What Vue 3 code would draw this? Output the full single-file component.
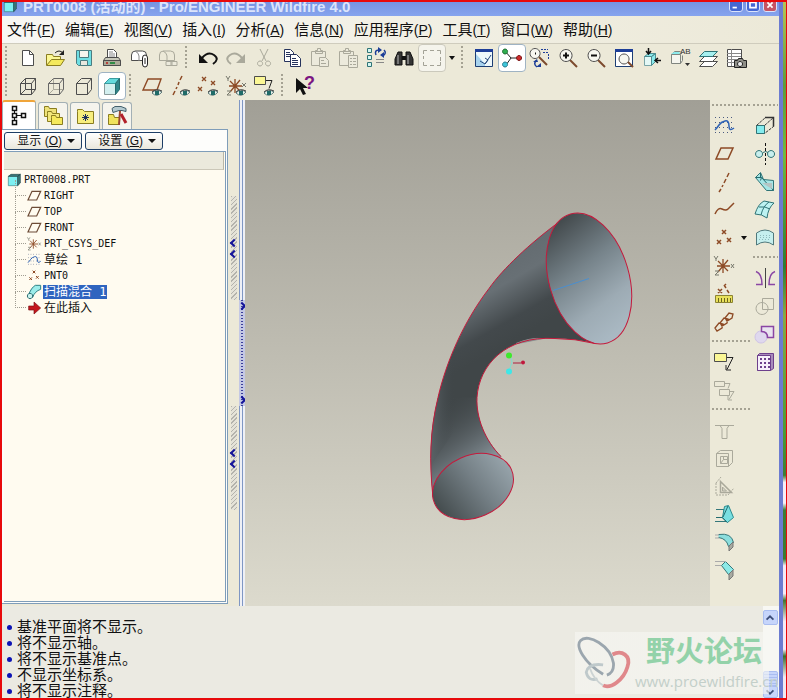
<script setup>
import { ref } from 'vue'

const menus = [
    ['文件', 'F'], ['编辑', 'E'], ['视图', 'V'], ['插入', 'I'], ['分析', 'A'],
    ['信息', 'N'], ['应用程序', 'P'], ['工具', 'T'], ['窗口', 'W'], ['帮助', 'H']
]

const fileTools = ['new', 'open', 'save', 'print', 'mail', 'link']
const editTools = ['undo', 'redo', 'cut', 'copy', 'paste', 'pasteSpecial', 'regenerate', 'find', 'select']
const viewTools = ['repaint', 'spin', 'orient', 'zoomIn', 'zoomOut', 'refit', 'reorient', 'saved', 'layers', 'manager']
const displayTools = ['wireframe', 'hidden', 'noHidden', 'shaded']
const datumTools = ['planeEye', 'axisEye', 'pointEye', 'csysEye', 'noteEye']

const bars = [
    [{ tools: fileTools }, { tools: editTools, arrow: true }, { tools: viewTools }],
    [{ tools: displayTools }, { tools: datumTools }, { tools: ['help'] }]
]

const datumColumn = [
    ['sketch', 'plane', 'axis', 'curve', 'point', 'csys', 'analysis', 'reference'],
    ['note', 'noteCopy'],
    ['hole', 'shell', 'rib', 'draft', 'round', 'chamfer']
]
const featureColumn = [
    ['extrude', 'revolve', 'sweep', 'boundary', 'style'],
    ['mirror', 'merge', 'trim', 'pattern']
]
const docks = [datumColumn, featureColumn]

const pressed = ref(['select', 'spin', 'shaded'])
const activeTab = ref('tree')
const selected = ref('扫描混合 1')

const tabs = ['tree', 'folders', 'favorites', 'connections']

const tree = [
    { icon: 'planeSmall', name: 'RIGHT' },
    { icon: 'planeSmall', name: 'TOP' },
    { icon: 'planeSmall', name: 'FRONT' },
    { icon: 'csys', name: 'PRT_CSYS_DEF' },
    { icon: 'sketch', name: '草绘 1', cjk: true },
    { icon: 'point', name: 'PNT0' },
    { icon: 'blend', name: '扫描混合 1', cjk: true },
    { icon: 'insert', name: '在此插入', cjk: true }
]

const messages = [
    '基准平面将不显示。',
    '将不显示轴。',
    '将不显示基准点。',
    '不显示坐标系。',
    '将不显示注释。'
]

const brown = '#8d4a25'
const grey = '#aaa99b'
const dark = '#4d4d4d'
const aqua = '#8beaec'
const teal = '#2f7476'
const purple = '#8a46a4'
const yellow = '#fbf795'

// every part is [path, stroke, fill, stroke width, dashes] on a 24 x 24 grid
const eye = [
    ['M12 19Q16 14 22 18Q17 24 12 19z', '#5a7878', '#e9f1ec'],
    ['M15 17h4v4h-4z', 'none', '#1f6b68'],
    ['M12 18Q16 14 22 17', '#444', 'none']
]
const magnifier = [
    ['M14 14L21 21', '#7c4a2d', 'none', 2],
    ['M10 3.500a6 6 0 1 0 .1 0z', dark, '#f7f7f0']
]
const cross = (x, y, s = 2) => `M${x - s} ${y - s}l${2 * s} ${2 * s}M${x + s} ${y - s}l${-2 * s} ${2 * s}`
const points = cross(12, 6) + cross(7, 16) + cross(17, 14)
const axes = [['M11 5V19M5 12H18M6 7L16 17M16 6L6 18', brown, 'none', 1.3]]
const axisMarks = [['M2 2l2 3 2-3M4 5v2M3 17h4l-4 4h4M19 10l3 4M22 10l-3 4', '#77786c', 'none']]

const icons = {
    new: [['M6.500 4.500h7l4 4v11h-11z', dark, '#fff'], ['M13.500 4.500v4h4', dark, 'none']],
    open: [
        ['M2.500 19V8.500h6l1 2h7v4', '#8a7d20', yellow],
        ['M2.500 19.500l5-6h13l-4 6z', '#8a7d20', '#f4e95c'],
        ['M11 7q4-4 8 0', '#222', 'none'],
        ['M20 4v5h-5z', 'none', '#222']
    ],
    save: [
        ['M4.500 4.500h15v15h-13l-2-2z', '#4b7c80', '#6fdfe3'],
        ['M7.500 4.500h9v7h-9z', '#4b7c80', '#f5f5ee'],
        ['M8.500 14.500h7v5h-7z', '#4b7c80', '#e8e8de']
    ],
    print: [
        ['M7.500 12V3.500h6l3 3V12', dark, '#fff'],
        ['M9 6h4M9 8h6M9 10h6', '#888', 'none'],
        ['M3.500 14.500l2-3h13l2 3v5h-17z', dark, '#c9c9bb'],
        ['M3.500 14.500h17v5h-17z', dark, '#aaaa98'],
        ['M6 16h2v2h-2z', 'none', '#b8403a'],
        ['M10 17h5', '#2f8c46', 'none', 2]
    ],
    mail: [
        ['M3.500 14.500V9q0-4 4-4h7q4 0 4 4v5.500z', dark, '#fff'],
        ['M7 5q4 2 4 5v5', '#888', 'none'],
        ['M14.500 12q0-3 2.500-3t2.500 3v6q0 3-2.500 3t-2.500-3zM17 12v6', '#222', '#fff']
    ],
    link: [
        ['M3.500 14.500V9q0-4 4-4h7q4 0 4 4v5.500z', grey, 'none'],
        ['M7 5q4 2 4 5v5', grey, 'none'],
        ['M10 15.500h6v4h-6zM15 15.500h6v4h-6z', grey, '#eceadc']
    ],
    undo: [['M6 12Q12 5 18 9T17 18', '#111', 'none', 2], ['M3 8v9h9z', 'none', '#111']],
    redo: [['M18 12Q12 5 6 9T7 18', grey, 'none', 2], ['M21 8v9h-9z', 'none', grey]],
    cut: [['M8 3l6 12M16 3l-6 12M8 15a2.500 2.500 0 1 0 .1 0zM16 15a2.500 2.500 0 1 0 .1 0z', grey, 'none']],
    copy: [
        ['M4.500 3.500h6l3 3v9h-9z', '#26335c', '#fff'],
        ['M6 6.500h4M6 8.500h6M6 10.500h6', '#26335c', 'none'],
        ['M10.500 8.500h6l4 4v8h-10z', '#26335c', '#fff'],
        ['M12 12.500h4M12 14.500h6M12 16.500h6M12 18.500h6', '#26335c', 'none']
    ],
    paste: [
        ['M3.500 5.500h14v14h-14zM7.500 7.500v-3h2v-2h3v2h2v3z', grey, '#eceadc'],
        ['M11.500 11.500h6l3 3v6h-9z', grey, '#eceadc'],
        ['M13 14.500h3M13 17.500h5', grey, 'none']
    ],
    pasteSpecial: [
        ['M3.500 5.500h14v14h-14zM7.500 7.500v-3h2v-2h3v2h2v3z', grey, '#eceadc'],
        ['M12.500 9.500h9v12h-9z', grey, '#eceadc'],
        ['M14 12.500h2M17 12.500h3M14 15.500h2M17 15.500h3M14 18.500h2M17 18.500h3', grey, 'none']
    ],
    regenerate: [
        ['M3.500 2.500h4v4h-4zM3.500 9.500h4v4h-4zM3.500 16.500h4v4h-4z', teal, '#d6f5f2'],
        ['M12 9Q10 4 15 4M20 4q3 3-1 6', '#1d3e98', 'none', 1.5],
        ['M14 1v6l4-3zM20 12v-6l-4 3z', 'none', '#1d3e98'],
        ['M12 13.500h8M12 16.500h8', '#888', 'none']
    ],
    find: [
        ['M3 19v-6l3-7h4v13zM21 19v-6l-3-7h-4v13z', '#111', '#333'],
        ['M10 10h4v4h-4z', 'none', '#111'],
        ['M6 9v9M16 9v9', '#bbb', 'none']
    ],
    select: [['M3.500 8V4.500H7M10 4.500h4M17 4.500h3.500V8M20.500 11v4M20.500 16v3.500H17M14 19.500h-4M7 19.500H3.500V16M3.500 13v-3', '#a3a296', 'none']],
    repaint: [
        ['M3.500 3.500h17v17h-17z', '#1d3e74', '#eef8fb'],
        ['M3 3h18v3H3z', 'none', '#1d3e98'],
        ['M4 20V8l9 10v2z', 'none', '#a8d3ee'],
        ['M8 15l5 3 3-4-3-2M13 18l6-9', '#24487c', 'none']
    ],
    spin: [
        ['M5 5l6 7h9M11 12l-5 7', '#222', 'none'],
        ['M5 3a2.500 2.500 0 1 0 .1 0z', '#1c6b31', '#2fae4f'],
        ['M19 9.500a2.500 2.500 0 1 0 .1 0z', '#7a1616', '#cf2b2b'],
        ['M5 16a2.500 2.500 0 1 0 .1 0z', '#257a8c', '#3fc7da']
    ],
    orient: [
        ['M7 2.500a5 5 0 1 0 .1 0z', dark, '#f7f7f0'],
        ['M11 11l8 8', '#7c4a2d', 'none', 2],
        ['M7 7.500h1', '#111', 'none', 2],
        ['M13 3.500h7M15 6.500h6M20.500 8v5', '#1d3e98', 'none', 1, '2 1'],
        ['M8 15q-3 3 1 6', '#1d3e98', 'none', 1.500],
        ['M5 16h5l-1-3zM8 21h5v-4z', 'none', '#1d3e98']
    ],
    zoomIn: [...magnifier, ['M7 9.500h6M10 6.500v6', '#111', 'none', 2]],
    zoomOut: [...magnifier, ['M7 9.500h6', '#111', 'none', 2]],
    refit: [
        ['M3.500 3.500h17v17h-17z', '#1d3e74', '#fff'],
        ['M3 3h18v3H3z', 'none', '#1d3e98'],
        ['M12 8a5 5 0 1 0 .1 0z', dark, '#f7f7f0'],
        ['M16 16l5 5', '#7c4a2d', 'none', 2]
    ],
    reorient: [
        ['M4.500 10.500h7v9h-7z', '#7aa5a7', '#e4f8f6'],
        ['M4.500 10.500l4-3h7l-4 3zM11.500 19.500l4-4v-8l-4 3z', '#4d8d91', aqua],
        ['M8.500 2v6M6 5l2.500 3L11 5M21 14.500h-6M18 12l-3 2.500 3 2.500', '#111', 'none', 1.500]
    ],
    saved: [
        ['M3.500 8.500h9v9h-9zM3.500 8.500l3-3h6M12.500 17.500l2-3v-5M12.500 8.500l2-2', '#80857f', '#f5f5ee'],
        ['M3 8h10l-2-2H6z', 'none', aqua],
        ['M17 17h5l-2.500 3z', 'none', '#333'],
        { t: 'AB', x: 12, y: 8 }
    ],
    layers: [
        ['M3.500 20.500l5-5h13l-5 5z', dark, '#fff'],
        ['M3.500 15.500l5-5h13l-5 5z', dark, '#fff'],
        ['M3.500 10.500l5-5h13l-5 5z', teal, '#a6f0ef']
    ],
    manager: [
        ['M3.500 3.500h14v17h-14z', dark, '#fff'],
        ['M3 7.500h14M3 10.500h14M3 13.500h14M3 16.500h14M7.500 3v17', '#888', 'none'],
        ['M10.500 14.500h3l1-2h4l1 2h3v7h-12z', '#222', '#8f8f88'],
        ['M16 15.500a2.500 2.500 0 1 0 .1 0z', '#222', '#eee']
    ],
    wireframe: [['M4.500 9.500h11v11h-11zM9.500 4.500h10v11h-10zM4.500 9.500l5-5M15.500 9.500l4-5M15.500 20.500l4-5M4.500 20.500l5-5', dark, 'none']],
    hidden: [
        ['M9.500 5v10.500h10M4.500 20.500l5-5', grey, 'none'],
        ['M4.500 9.500h11v11h-11zM4.500 9.500l5-5h10l-4 5M15.500 20.500l4-5v-11', '#666', 'none']
    ],
    noHidden: [['M4.500 9.500h11v11h-11zM4.500 9.500l5-5h10l-4 5M15.500 20.500l4-5v-11', dark, 'none']],
    shaded: [
        ['M4.500 9.500h11v11h-11z', '#8a9a9a', '#d3efef'],
        ['M4.500 9.500l5-5h10l-4 5z', '#3a9b9f', '#63d9dc'],
        ['M15.500 9.500l4-5v11l-4 5z', '#246b6e', '#2f8488']
    ],
    plane: [['M9 6h12l-5 11H4z', brown, 'none', 1.500]],
    planeSmall: [['M9 5h13l-6 13H3z', '#6d4b36', 'none', 1.800]],
    axis: [['M17 3l-2 4M14 9l-2 4M11 15l-1 2M9 19l-2 3', brown, 'none', 1.500]],
    curve: [['M3 16Q6 9 10 11T16 11T22 5', brown, 'none', 1.500]],
    point: [[points, brown, 'none', 1.500]],
    csys: [...axes, ...axisMarks],
    planeEye: [['M8 5h13l-4 11H3z', brown, 'none', 1.400], ...eye],
    axisEye: [['M14 2l-2 4M11 8l-1 3M9 13l-1 2M7 17l-2 4', brown, 'none', 1.500], ...eye],
    pointEye: [[cross(8, 5) + cross(4, 15) + cross(17, 9), brown, 'none', 1.300], ...eye],
    csysEye: [...axes, ['M2 2l2 3 2-3M4 5v2M3 17h4l-4 4h4M18 9l4 4M22 9l-4 4', '#77786c', 'none'], ...eye],
    noteEye: [['M2.500 2.500h11v8h-11z', dark, yellow], ['M14 6.500h6l-3 8', '#222', 'none'], ...eye],
    help: [['M4 4v15l4-4 3 6 3-1-3-6h5z', 'none', '#111'], { t: '?', x: 12, y: 15, big: true }],
    sketch: [
        ['M3 3.500h19M3 8.500h19M3 13.500h19M3 18.500h19', '#4a5a80', 'none', 1, '1 3'],
        ['M3 16Q5 14 7 11T13 7T17 12T22 14', '#2d62b5', 'none', 1.500]
    ],
    analysis: [
        [cross(8, 9) + 'M12 3l2 3M15 8l2 3M14 2l-2 2', brown, 'none', 1.500],
        ['M3.500 13.500h17v7h-17z', '#8c8432', '#e9e15a'],
        ['M6.500 16v4M9.500 16v4M12.500 16v4M15.500 16v4M18.500 16v4', '#6b6420', 'none']
    ],
    reference: [['M3 18l4-5 4 1-1 4-5 3zM8 13l4-5 4 1-1 4-5 3zM13 8l4-5 4 1-1 4-5 3z', brown, 'none', 1.300]],
    note: [['M2.500 3.500h12v8h-12z', dark, yellow], ['M15 7.500h6l-6 12M14 15v5h5', '#222', 'none']],
    noteCopy: [['M2.500 3.500h10v5h-10zM7.500 11.500h10v6h-10zM13 5.500h5l-2 5M18 13.500h4l-5 8M16 18v4h4', grey, 'none']],
    hole: [['M3 7.500h5l2 3v10h5v-10l2-3h5M8 7.500h9', grey, 'none']],
    shell: [['M4.500 7.500h12v13h-12zM4.500 7.500l4-3h12v12l-4 4M8.500 10.500h7v7h-7zM11.500 13.500v-3M11.500 13.500h4M11.500 13.500l-3 4', grey, 'none']],
    rib: [
        ['M8.500 7.500l11 11h-11z', grey, 'none', 1.500],
        ['M4 9v12h12l6-7M4 9l5-6', grey, 'none', 1, '2 1'],
        ['M10.500 13l4 4h-4z', grey, '#d5d4c6']
    ],
    draft: [
        ['M4 7.500h8v8H4M3 19.500h12', '#35777a', 'none'],
        ['M12.500 4.500l4-1 5 12-6 5-5-5z', '#2a8b8e', '#79dfe1'],
        ['M4 15.500h6l5 5M16 4l-5 11', '#246b6e', 'none']
    ],
    round: [
        ['M6.500 4.500q13-2 15 8l-5 4q-2-8-10-9', '#35777a', '#8cdedd'],
        ['M17 16v5l4-4v-5z', '#777', '#a8aaa0'],
        ['M3 5h4M3 8h4', '#aaa', 'none']
    ],
    chamfer: [
        ['M9.500 7.500l4-4 8 8-5 5z', '#35777a', '#8ce9e7'],
        ['M17 16v6l4-4v-6z', '#777', '#a8aaa0'],
        ['M3 3.500h11M3 7.500h6', '#aaa', 'none']
    ],
    extrude: [
        ['M3.500 11.500h8v8h-8z', teal, '#85ecee'],
        ['M3.500 11.500l9-8h8v9l-9 7M11.500 11.500l9-8', '#333', 'none', 1, '3 1'],
        ['M12 3.500h8.500v9', '#333', 'none', 1.500]
    ],
    revolve: [
        ['M6 8.500a3.500 3.500 0 1 0 .1 0zM18 8.500a3.500 3.500 0 1 0 .1 0z', teal, '#c8efee'],
        ['M12.500 1v22', '#111', 'none', 1, '3 2'],
        ['M10 10.500q3-2 5 0', teal, 'none']
    ],
    sweep: [
        ['M2.500 7.500l5-5 3 7 10 1v10h-7z', teal, '#a5e6e6'],
        ['M2.500 7.500h6l12 13M7.500 3v5M8.500 7.500l-1 3', '#246b6e', 'none'],
        ['M9 13h10v6z', 'none', '#b5c4c3']
    ],
    boundary: [
        ['M2 16Q5 6 11 3l10 2Q15 10 14 20q-5-4-12-4z', teal, '#bdf2f1'],
        ['M8 17Q10 8 16 4M6 9q6-1 11 2', teal, 'none']
    ],
    style: [
        ['M3.500 7Q12 1 20.500 7v12Q12 13 3.500 19z', '#50797c', '#c5efee'],
        ['M7 9.500h11M7 11.500h11M6 13.500h12', '#8eb9ba', 'none', 1, '1 2']
    ],
    mirror: [
        ['M12.500 2v20', '#444', 'none'],
        ['M3 5.500q6 2 6 13H3M22 5.500q-6 2-6 13h6', purple, 'none', 1.500]
    ],
    merge: [['M9.500 4.500h11v11h-11zM9 8.500a6 6 0 1 0 .1 0z', grey, 'none']],
    trim: [
        ['M8 9a6 6 0 1 0 .1 0z', '#cfc3e6', '#dfd8ee'],
        ['M8.500 4.500h12v11h-6q0-6-6-6z', purple, '#e9e4ef', 1.500]
    ],
    pattern: [
        ['M4.500 5.500l2-2h14v15l-3 2h-13z', '#6d3f8c', '#a88bbb'],
        ['M4.500 5.500h13v15h-13z', '#6d3f8c', '#f6effa'],
        ['M7 9h10M7 13h10M7 17h10', '#6d3f8c', 'none', 2, '2 2']
    ],
    part: [
        ['M3.500 6.500h14v14h-14z', '#3b8084', '#7df0f2'],
        ['M3.500 6.500l4-3h14l-4 3zM17.500 20.500l4-4v-13l-4 3z', '#22494c', '#3a7a7d']
    ],
    blend: [
        ['M3 18Q8 5 14 2h8v6Q13 11 10 20z', '#2e8085', '#9cecea', 1.500],
        ['M6 14a4 4 0 1 0 .1 0z', '#2e6d71', '#c8f3ef', 1.500]
    ],
    insert: [['M4 9h8V3l10 9-10 9v-6H4z', '#7a0f14', '#c5161d']],
    tree: [
        ['M5.500 2.500h4v4h-4zM5.500 9.500h4v4h-4zM5.500 16.500h4v4h-4zM14.500 9.500h4v4h-4z', '#111', '#fff', 1.500],
        ['M7.500 7v2M7.500 14v2M10 11.500h4', '#111', 'none']
    ],
    folders: [
        ['M3.500 4.500v-2h4l1 2h7v8h-12z', '#8a7d20', '#eee27a'],
        ['M6.500 9.500v-2h4l1 2h7v8h-12z', '#8a7d20', '#f2e77c'],
        ['M10.500 13.500v-2h4l1 2h6v7h-11z', '#8a7d20', '#f5e95c']
    ],
    favorites: [
        ['M4.500 7.500v-2h5l2 2h9v12h-16z', '#8a7d20', '#f7ee7d'],
        ['M12.500 10v7M9 13.500h7M10 11l5 5M15 11l-5 5', '#1d3060', 'none']
    ],
    connections: [
        ['M3.500 13.500v-3h5l1 3h5v7h-11z', '#8a7d20', '#f0e35c'],
        ['M7 4.500l3-2h6l5 2v3l-4-1h-3l-6 2z', '#43606c', '#b4c9cf'],
        ['M15 7l-1 14', '#9b4a31', 'none', 2],
        ['M16 10l5 9', '#b2202a', 'none', 3]
    ]
}

function toggle(name) {
    if (pressed.value.includes(name)) {
        pressed.value = pressed.value.filter(item => item !== name)
    } else {
        pressed.value.push(name)
    }
}
</script>

<template>
    <div class="screen">
        <div class="window">
            <header class="title">
                <svg class="icon" viewBox="0 0 24 24">
                    <path v-for="(p, i) in icons.part" :key="i" :d="p[0]" :stroke="p[1]" :fill="p[2]" />
                </svg>
                <h1>PRT0008 (活动的) - Pro/ENGINEER Wildfire 4.0</h1>
                <div class="controls">
                    <button aria-label="最小化"><svg viewBox="0 0 14 14"><path d="M3 10h5" stroke-width="2" /></svg></button>
                    <button aria-label="最大化"><svg viewBox="0 0 14 14"><path d="M3.500 4h7v6h-7z" stroke-width="2" /></svg></button>
                    <button class="close" aria-label="关闭"><svg viewBox="0 0 14 14"><path d="M4 4l6 6M10 4l-6 6" stroke-width="2" /></svg></button>
                </div>
            </header>

            <nav class="menu">
                <button v-for="m in menus" :key="m[1]">{{ m[0] }}<span>(<u>{{ m[1] }}</u>)</span></button>
            </nav>

            <div class="bars">
                <div v-for="(bar, b) in bars" :key="b" class="bar">
                    <div v-for="(group, g) in bar" :key="g" class="group">
                        <i class="grip"></i>
                        <button v-for="name in group.tools" :key="name" class="tool" :class="[name, { on: pressed.includes(name) }]"
                            :aria-label="name" @click="toggle(name)">
                            <svg class="icon" viewBox="0 0 24 24">
                                <template v-for="(p, i) in icons[name]" :key="i">
                                    <text v-if="p.t" :x="p.x" :y="p.y" :class="{ big: p.big }">{{ p.t }}</text>
                                    <path v-else :d="p[0]" :stroke="p[1]" :fill="p[2]" :stroke-width="p[3] || 1" :stroke-dasharray="p[4]" />
                                </template>
                            </svg>
                        </button>
                        <button v-if="group.arrow" class="drop" aria-label="选取选项"></button>
                    </div>
                </div>
            </div>

            <main class="work">
                <aside class="navigator">
                    <div class="tabs">
                        <button v-for="name in tabs" :key="name" :class="{ active: activeTab === name }" :aria-label="name"
                            @click="activeTab = name">
                            <svg class="icon" viewBox="0 0 24 24">
                                <path v-for="(p, i) in icons[name]" :key="i" :d="p[0]" :stroke="p[1]" :fill="p[2]" :stroke-width="p[3] || 1" />
                            </svg>
                        </button>
                    </div>
                    <div class="panel">
                        <div class="options">
                            <button>显示 (<u>O</u>)<i></i></button>
                            <button>设置 (<u>G</u>)<i></i></button>
                        </div>
                        <div class="tree">
                            <div class="tree-head"></div>
                            <div class="node root">
                                <svg class="icon" viewBox="0 0 24 24">
                                    <path v-for="(p, i) in icons.part" :key="i" :d="p[0]" :stroke="p[1]" :fill="p[2]" />
                                </svg>
                                <span class="name">PRT0008.PRT</span>
                            </div>
                            <ul>
                                <li v-for="item in tree" :key="item.name" class="node" @click="selected = item.name">
                                    <i class="branch"></i>
                                    <svg class="icon" viewBox="0 0 24 24">
                                        <path v-for="(p, i) in icons[item.icon]" :key="i" :d="p[0]" :stroke="p[1]" :fill="p[2]"
                                            :stroke-width="p[3] || 1" :stroke-dasharray="p[4]" />
                                    </svg>
                                    <span class="name" :class="{ cjk: item.cjk, selected: selected === item.name }">{{ item.name }}</span>
                                </li>
                            </ul>
                        </div>
                    </div>
                </aside>

                <div class="sash">
                    <div class="hatches">
                        <div class="hatch"><b></b><b></b></div>
                        <div class="hatch"><b></b><b></b></div>
                    </div>
                    <div class="rail">
                        <div class="handle"><b></b><b></b></div>
                    </div>
                </div>

                <section class="viewport">
                    <svg viewBox="245 100 465 505">
                        <defs>
                            <linearGradient id="body" gradientUnits="userSpaceOnUse" x1="492" y1="264" x2="530" y2="330">
                                <stop offset="0" stop-color="#646c71" />
                                <stop offset="0.300" stop-color="#687075" />
                                <stop offset="0.750" stop-color="#43494c" />
                                <stop offset="1" stop-color="#404648" />
                            </linearGradient>
                            <linearGradient id="bend" gradientUnits="userSpaceOnUse" x1="448" y1="400" x2="490" y2="460">
                                <stop offset="0" stop-color="#454c4f" stop-opacity="0" />
                                <stop offset="1" stop-color="#8a959c" />
                            </linearGradient>
                            <linearGradient id="shade" gradientUnits="userSpaceOnUse" x1="430" y1="400" x2="478" y2="400">
                                <stop offset="0" stop-color="#5b6367" />
                                <stop offset="0.500" stop-color="#42484b" stop-opacity="0" />
                            </linearGradient>
                            <linearGradient id="mouth" gradientUnits="userSpaceOnUse" x1="562" y1="222" x2="607" y2="335">
                                <stop offset="0" stop-color="#454c4f" />
                                <stop offset="0.400" stop-color="#76838a" />
                                <stop offset="0.750" stop-color="#9dabb4" />
                                <stop offset="1" stop-color="#a9b8c2" />
                            </linearGradient>
                            <linearGradient id="foot" gradientUnits="userSpaceOnUse" x1="434" y1="494" x2="512" y2="474">
                                <stop offset="0" stop-color="#464e50" />
                                <stop offset="0.550" stop-color="#747f85" />
                                <stop offset="1" stop-color="#96a3aa" />
                            </linearGradient>
                        </defs>
                        <g class="pipe">
                            <path d="M557 223C530 243 503 268 489 288C463 322 446 362 438 397C430 430 429 460 433 497L472 486L501 456C485 440 476 417 477 397C479 365 505 335 555 338Q575 338 595 343L589 278z" fill="url(#body)" />
                            <path d="M438 397C430 430 429 460 433 497L472 486L501 456C485 440 476 417 477 397z" fill="url(#bend)" />
                            <path d="M489 288C463 322 446 362 438 397C432 420 430 440 431 465L477 397L489 340z" fill="url(#shade)" />
                            <path d="M516 343Q530 337 543 338L518 343z" fill="#8b8f90" stroke="#8b8f90" />
                            <path class="edge" d="M557 223C530 243 503 268 489 288C463 322 446 362 438 397C430 430 429 460 433 497M501 456C485 440 476 417 477 397C479 365 505 335 555 338Q575 338 595 343" />
                            <ellipse class="edge" cx="589" cy="278" rx="40" ry="67" transform="rotate(-16 589 278)" fill="url(#mouth)" />
                            <ellipse class="edge" cx="473" cy="486" rx="42" ry="31" transform="rotate(-24 473 486)" fill="url(#foot)" />
                        </g>
                        <path d="M553 290L589 278" stroke="#4a8fd0" />
                        <path d="M511 357l1 5-3 8" stroke="#7ddfcf" fill="none" />
                        <path d="M513 362.500h8" stroke="#b01c3c" />
                        <circle cx="509" cy="355" r="3" fill="#3fe82c" />
                        <circle cx="509" cy="371" r="3" fill="#3ee7e7" />
                        <circle cx="523" cy="362" r="2" fill="#c0183c" />
                    </svg>
                </section>

                <aside class="docks">
                    <div v-for="(dock, d) in docks" :key="d" class="dock">
                        <div v-for="(group, g) in dock" :key="g" class="stack">
                            <i class="grip wide"></i>
                            <div v-for="name in group" :key="name" class="slot">
                                <button class="tool" :aria-label="name">
                                    <svg class="icon" viewBox="0 0 24 24">
                                        <path v-for="(p, i) in icons[name]" :key="i" :d="p[0]" :stroke="p[1]" :fill="p[2]"
                                            :stroke-width="p[3] || 1" :stroke-dasharray="p[4]" />
                                    </svg>
                                </button>
                                <button v-if="name === 'point'" class="drop" aria-label="基准点选项"></button>
                            </div>
                        </div>
                    </div>
                </aside>
            </main>

            <footer class="log">
                <ul>
                    <li v-for="line in messages" :key="line">{{ line }}</li>
                </ul>
                <div class="scroll">
                    <button aria-label="向上"><svg viewBox="0 0 14 14"><path d="M3 9l4-4 4 4" /></svg></button>
                    <span class="thumb"></span>
                    <button aria-label="向下"><svg viewBox="0 0 14 14"><path d="M3 4l4 4 4-4" /></svg></button>
                </div>
                <div class="brand">
                    <svg viewBox="0 0 64 62">
                        <path d="M30 44C10 32 0 14 6 8C14 0 38 14 41 32Q42 42 34 45" stroke="#9ba6ae" stroke-width="3" />
                        <path d="M30 34Q14 32 12 42Q14 52 24 49" stroke="#bfc9cb" stroke-width="3" />
                        <path d="M40 23C50 18 60 24 56 36C52 50 38 60 30 56" stroke="#e0888b" stroke-width="4" />
                        <path d="M16 38Q20 50 30 56" stroke="#ccd3d3" stroke-width="2" />
                    </svg>
                    <div>
                        <strong>野火论坛</strong>
                        <span>www.proewildfire.cn</span>
                    </div>
                </div>
            </footer>
        </div>
        <div class="desktop"></div>
    </div>
</template>

<style>
body {
    margin: 0;
}
</style>

<style scoped>
.screen {
    display: flex;
    box-sizing: border-box;
    min-height: 100vh;
    border: 2px solid #e8090b;
    border-right-width: 1px;
    font-family: "Liberation Sans", "Noto Sans CJK SC", sans-serif;
    color: #111;
    overflow: hidden;
}

.window {
    flex: 1;
    min-width: 0;
    display: flex;
    flex-direction: column;
    border-right: 4px solid #6c7cd0;
    background: #ece9d8;
}

.desktop {
    width: 3px;
    background: linear-gradient(#b7c455 0, #5f9b3a 12%, #74b83e 22%, #2f7a33 38%, #8aa845 45%, #4b9a35 62%, #3f7c33 68%, #f6eef6 69%, #f6eef6 72%, #3f7c33 73%, #3b7a30 80%, #f3eaf4 81%, #f5eaf5 85%, #46742c 86%, #f5eaf5 89%, #f5eaf5 93%, #3d6e2c 94%, #f1eaf1 97%);
}

button {
    padding: 0;
    border: 0;
    background: none;
    color: inherit;
    font: inherit;
}

ul {
    margin: 0;
    padding: 0;
    list-style: none;
}

.icon {
    display: block;
    flex: none;
    width: 24px;
    height: 24px;
}

.icon text {
    font: 8px "Liberation Sans", sans-serif;
    fill: #333;
}

.icon text.big {
    font: bold 18px "Liberation Sans", sans-serif;
    fill: #7b1682;
}

.title {
    display: flex;
    align-items: flex-end;
    height: 14px;
    overflow: hidden;
    background: linear-gradient(#7793e2, #86a4ee);
}

.title .icon {
    width: 16px;
    height: 16px;
    margin: 0 5px 2px 0;
}

.title h1 {
    flex: 1;
    margin: 0;
    font-size: 15px;
    line-height: 18px;
    color: #dbe4fb;
    white-space: nowrap;
}

.controls {
    display: flex;
    gap: 3px;
    padding: 0 2px 4px 0;
}

.controls button {
    width: 14px;
    height: 14px;
    border: 1px solid #dbe4fb;
    border-radius: 3px;
    box-sizing: border-box;
    background: #4467d3;
}

.controls .close {
    background: #c65363;
}

.controls svg {
    display: block;
    fill: none;
    stroke: #fff;
}

.menu {
    display: flex;
    gap: 10px;
    height: 27px;
    padding-left: 5px;
    border-bottom: 1px solid #cfccbd;
    background: linear-gradient(90deg, #f8f7f3, #ece9d8);
    font-size: 15px;
    line-height: 24px;
}

.menu button {
    white-space: nowrap;
}

.menu span {
    font-size: 14px;
}

.bar,
.group {
    display: flex;
}

.grip {
    flex: none;
    width: 2px;
    height: 24px;
    margin: 2px 7px 2px 3px;
    background: repeating-linear-gradient(#a5a293 0 2px, transparent 2px 4px);
}

.grip.wide {
    display: block;
    width: auto;
    height: 2px;
    margin: 4px 1px 6px 2px;
    background: repeating-linear-gradient(90deg, #a5a293 0 2px, transparent 2px 4px);
}

.tool {
    display: flex;
    align-items: center;
    justify-content: center;
    box-sizing: border-box;
    width: 28px;
    height: 28px;
    border: 1px solid transparent;
    border-radius: 4px;
}

.tool.on {
    border-color: #9fb3c3;
    background: #fff;
}

.tool.select.on {
    border-color: #cbc9bc;
    background: #f5f4ec;
}

.drop {
    display: flex;
    align-items: center;
    justify-content: center;
    width: 12px;
    height: 28px;
}

.drop::before,
.options i {
    content: '';
    border: 3px solid transparent;
    border-top: 4px solid #111;
    border-bottom: 0;
}

.work {
    flex: 1;
    display: grid;
    grid-template-columns: 226px 17px 1fr 69px;
}

.navigator {
    display: flex;
    flex-direction: column;
    padding-bottom: 2px;
}

.tabs {
    display: flex;
    gap: 2px;
    height: 29px;
    align-items: flex-end;
}

.tabs button {
    display: flex;
    align-items: center;
    justify-content: center;
    box-sizing: border-box;
    width: 30px;
    height: 27px;
    border: 1px solid #a3b0b5;
    border-bottom: 0;
    border-radius: 3px 3px 0 0;
    background: #f5f4ed;
}

.tabs .active {
    width: 34px;
    height: 29px;
    border-top: 2px solid #f0a53a;
    background: #fff;
}

.panel {
    flex: 1;
    display: flex;
    flex-direction: column;
    padding: 2px 1px 1px 2px;
    border: 1px solid #7f9db9;
    border-left: 0;
    background: #fdfdfb;
}

.options {
    display: flex;
    gap: 3px;
    padding-bottom: 1px;
}

.options button {
    display: flex;
    align-items: center;
    justify-content: flex-end;
    box-sizing: border-box;
    width: 78px;
    height: 18px;
    padding-right: 6px;
    border: 1px solid #1d3e66;
    border-radius: 3px;
    background: linear-gradient(#fff, #e9e7dc);
    font-size: 12px;
    line-height: 16px;
    white-space: pre;
}

.options i {
    margin-left: 5px;
    border-width: 4px 4px 0;
}

.tree {
    flex: 1;
    border: 1px solid #7f9db9;
    border-left: 0;
    background: #fffbf0;
}

.tree-head {
    height: 17px;
    margin: 0 1px 2px 0;
    border-right: 1px solid #b9b6a6;
    border-bottom: 1px solid #cbc7b8;
    background: #ebe9dc;
}

.tree ul {
    padding-left: 11px;
}

.node {
    display: flex;
    align-items: center;
    height: 16px;
}

.node .icon {
    width: 16px;
    height: 16px;
}

.root {
    padding-left: 2px;
}

.branch {
    box-sizing: border-box;
    width: 11px;
    height: 16px;
    margin: -8px 0 8px;
    border-left: 1px dotted #a09d92;
    border-bottom: 1px dotted #a09d92;
}

.name {
    margin-left: 1px;
    padding: 0 1px;
    font: 10px/14px "DejaVu Sans Mono", "Noto Sans CJK SC", monospace;
    white-space: pre;
}

.name.cjk {
    font-size: 12px;
}

.selected {
    background: #2f64bf;
    color: #fff;
}

.sash {
    display: flex;
    justify-content: space-between;
    padding-left: 3px;
}

.hatches {
    display: flex;
    flex-direction: column;
    justify-content: center;
    gap: 106px;
}

.hatch {
    display: flex;
    flex-direction: column;
    align-items: center;
    justify-content: center;
    gap: 5px;
    width: 6px;
    height: 104px;
    background: repeating-linear-gradient(135deg, #b4b3ac 0 1px, #e5e3d8 1px 3px);
}

.sash b {
    flex: none;
    width: 6px;
    height: 6px;
    box-sizing: border-box;
    border: solid #14149a;
    border-width: 0 0 2px 2px;
    transform: rotate(45deg);
}

.rail {
    display: flex;
    align-items: center;
    width: 6px;
    background: repeating-linear-gradient(90deg, #7f97c4 0 1px, #eef0f6 1px 3px);
}

.handle {
    display: flex;
    flex-direction: column;
    align-items: center;
    justify-content: space-between;
    box-sizing: border-box;
    width: 6px;
    height: 106px;
    padding: 3px 0;
    background: repeating-linear-gradient(#3a3e9a 0 1px, transparent 1px 3px) center / 2px 100% no-repeat, #c4c8e4;
}

.sash .handle b {
    border-width: 2px 2px 0 0;
}

.viewport {
    position: relative;
    background: linear-gradient(#a19f96, #dcdacd);
}

.viewport svg {
    position: absolute;
    width: 100%;
    height: 100%;
}

.edge {
    stroke: #c41a3c;
}

path.edge {
    fill: none;
}

.docks {
    display: grid;
    grid-template-columns: 41px 28px;
}

.slot {
    display: flex;
}

.log {
    position: relative;
    display: flex;
    justify-content: space-between;
    height: 92px;
    background: #ebeae2;
}

.log ul {
    padding: 13px 0 0 5px;
}

.log li {
    display: flex;
    align-items: center;
    gap: 5px;
    height: 16px;
    font-size: 15px;
    line-height: 16px;
    white-space: nowrap;
}

.log li::before {
    content: '';
    width: 5px;
    height: 5px;
    border-radius: 50%;
    background: #0d14b4;
}

.scroll {
    display: flex;
    flex-direction: column;
    width: 15px;
    padding: 4px 1px 0 0;
    background: #f7f7f3;
}

.scroll button,
.thumb {
    flex: none;
    box-sizing: border-box;
    height: 15px;
    border: 1px solid #a9bdf0;
    border-radius: 2px;
    background: #c6d5fb;
}

.scroll button:last-child {
    height: 12px;
}

.scroll svg {
    display: block;
    height: 12px;
    fill: none;
    stroke: #3c4d78;
    stroke-width: 2;
}

.thumb {
    margin-top: auto;
    background: repeating-linear-gradient(#c6d5fb 0 2px, #a9bdf0 2px 3px);
}

.brand {
    position: absolute;
    right: 0;
    bottom: 4px;
    display: flex;
    width: 204px;
    height: 62px;
    background: linear-gradient(90deg, rgba(247, 247, 243, 0.6) 95%, transparent 95%);
}

.brand svg {
    flex: none;
    width: 60px;
    height: 60px;
    fill: none;
}

.brand strong {
    display: block;
    padding-left: 11px;
    font-size: 29px;
    line-height: 40px;
    color: #93d2a9;
}

.brand span {
    display: block;
    font: 15px/18px "Open Sans", sans-serif;
    color: #c3cfc9;
}
</style>
